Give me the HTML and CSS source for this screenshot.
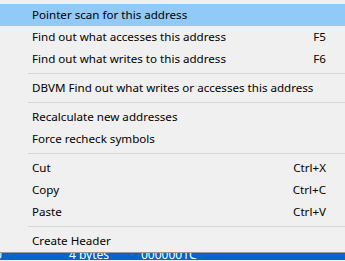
FILE: index.html
```html
<!DOCTYPE html>
<html lang="en">
<head>
  <meta charset="UTF-8" />
  <title>Context menu</title>
  <link rel="stylesheet" href="styles.css">
</head>
<body>
  <div class="menu">
    <div class="item active"><span>Pointer scan for this address</span></div>
    <div class="item"><span>Find out what accesses this address</span><span class="key">F5</span></div>
    <div class="item"><span>Find out what writes to this address</span><span class="key">F6</span></div>
    <div class="sep"></div>
    <div class="item"><span>DBVM Find out what writes or accesses this address</span></div>
    <div class="sep"></div>
    <div class="item"><span>Recalculate new addresses</span></div>
    <div class="item"><span>Force recheck symbols</span></div>
    <div class="sep"></div>
    <div class="item"><span>Cut</span><span class="key">Ctrl+X</span></div>
    <div class="item"><span>Copy</span><span class="key">Ctrl+C</span></div>
    <div class="item"><span>Paste</span><span class="key">Ctrl+V</span></div>
    <div class="sep"></div>
    <div class="item"><span>Create Header</span></div>
  </div>

  <div class="list-row">
    <span class="c0">0</span>
    <span class="c1">4 bytes</span>
    <span class="c2">0000001C</span>
  </div>
</body>
</html>
```

FILE: styles.css
```css
body { margin: 0; font-family: "Noto Sans", "Open Sans", sans-serif; font-size: 11.6px; color: #000; background: #f0f0f0; overflow: hidden; }
.menu { height: 253px; box-sizing: border-box; padding-top: 4px; background: #f0f0f0; border-bottom: 1px solid #9a9a9a; }
.item { height: 22px; box-sizing: border-box; padding: 0 19px 2px 32px; display: flex; align-items: center; justify-content: space-between; }
.item.active { background: #91c9f7; }
.sep { height: 1px; background: #d7d7d7; margin: 3px 0 3px 28px; }
.list-row { height: 7px; background: #0066cc; color: #fff; display: flex; overflow: hidden; font-size: 12px; line-height: 7px; }
.list-row span { display: block; margin-top: -2px; }
.c0 { margin-left: -5px; width: 74px; }
.c1 { width: 72px; }
```
